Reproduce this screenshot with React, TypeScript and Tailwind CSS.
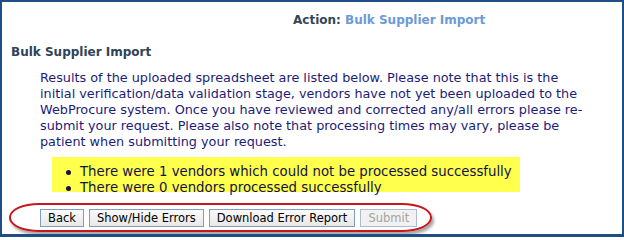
export default function App() {
  const buttons = [
    { label: "Back", disabled: false },
    { label: "Show/Hide Errors", disabled: false },
    { label: "Download Error Report", disabled: false },
    { label: "Submit", disabled: true },
  ]

  return (
    <div className="w-[624px] h-[237px] bg-white border-x-2 border-t-2 border-b-[3px] border-[#1f4e86] font-['DejaVu_Sans',sans-serif] overflow-hidden">
      <div className="pt-[10px] pl-[291px] text-[12px] leading-[16px] font-bold whitespace-nowrap">
        <span className="text-[#34465a]">Action: </span>
        <span className="text-[#6b9ad6]">Bulk Supplier Import</span>
      </div>

      <h2 className="mt-[16px] ml-[9px] text-[12px] leading-[16px] font-bold text-[#2f4358]">Bulk Supplier Import</h2>

      <p className="mt-[10px] ml-[38px] w-[580px] text-[12.8px] leading-[16px] text-[#1c1c78] whitespace-nowrap">
        Results of the uploaded spreadsheet are listed below. Please note that this is the
        <br />
        initial verification/data validation stage, vendors have not yet been uploaded to the
        <br />
        WebProcure system. Once you have reviewed and corrected any/all errors please re-
        <br />
        submit your request. Please also note that processing times may vary, please be
        <br />
        patient when submitting your request.
      </p>

      <div className="mt-[7px] ml-[50px] w-[468px] h-[35px] pt-[7px] bg-[#ffff4d]">
        <ul className="text-[13.3px] leading-[16px] text-[#12123e] whitespace-nowrap">
          <li className="flex items-center">
            <span className="ml-[14px] mr-[9px] w-[5px] h-[5px] rounded-full bg-[#12123e]" />
            There were 1 vendors which could not be processed successfully
          </li>
          <li className="flex items-center">
            <span className="ml-[14px] mr-[9px] w-[5px] h-[5px] rounded-full bg-[#12123e]" />
            There were 0 vendors processed successfully
          </li>
        </ul>
      </div>

      <div className="mt-[11px] ml-[7px] w-[423px] h-[29px] flex items-center pl-[29px] border-2 border-[#c8161d] rounded-[30px/14px] shadow-[2px_3px_3px_rgba(0,0,0,0.35)]">
        <div className="flex gap-[5px]">
          {buttons.map((b) => (
            <button
              key={b.label}
              disabled={b.disabled}
              className={
                b.disabled
                  ? "h-[18px] px-[7px] border border-[#a9bcd3] bg-[#f1f1f1] text-[11.5px] leading-[14px] text-[#a3a3a3] whitespace-nowrap"
                  : "h-[18px] px-[7px] border border-[#7f9db9] bg-gradient-to-b from-[#fafafa] to-[#e8e8e8] text-[11.5px] leading-[14px] text-black whitespace-nowrap"
              }
            >
              {b.label}
            </button>
          ))}
        </div>
      </div>
    </div>
  )
}
